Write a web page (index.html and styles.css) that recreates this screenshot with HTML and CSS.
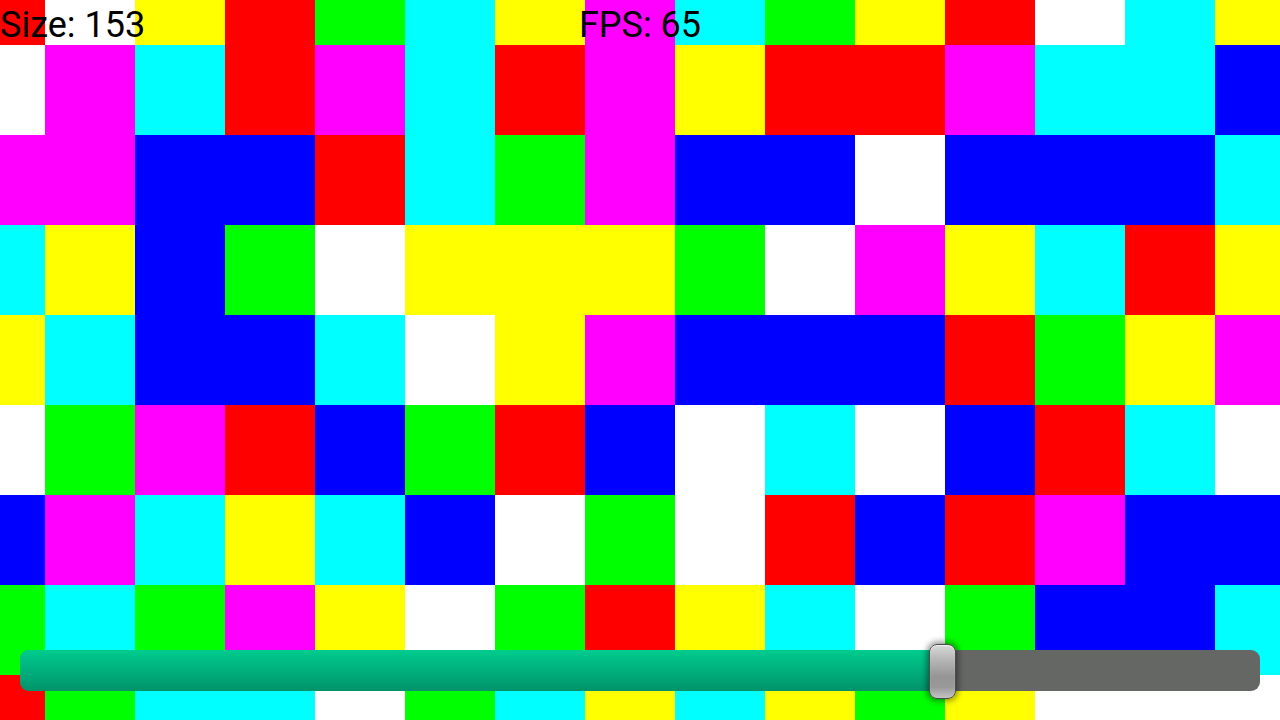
FILE: index.html
```html
<!DOCTYPE html>
<html>
<head>
<meta charset="utf-8">
<link rel="stylesheet" href="styles.css">
</head>
<body>
<div class="stage">
  <div class="grid">
    <i class="r"></i><i class="w"></i><i class="y"></i><i class="r"></i><i class="g"></i><i class="c"></i><i class="y"></i><i class="m"></i><i class="c"></i><i class="g"></i><i class="y"></i><i class="r"></i><i class="w"></i><i class="c"></i><i class="y"></i>
    <i class="w"></i><i class="m"></i><i class="c"></i><i class="r"></i><i class="m"></i><i class="c"></i><i class="r"></i><i class="m"></i><i class="y"></i><i class="r"></i><i class="r"></i><i class="m"></i><i class="c"></i><i class="c"></i><i class="b"></i>
    <i class="m"></i><i class="m"></i><i class="b"></i><i class="b"></i><i class="r"></i><i class="c"></i><i class="g"></i><i class="m"></i><i class="b"></i><i class="b"></i><i class="w"></i><i class="b"></i><i class="b"></i><i class="b"></i><i class="c"></i>
    <i class="c"></i><i class="y"></i><i class="b"></i><i class="g"></i><i class="w"></i><i class="y"></i><i class="y"></i><i class="y"></i><i class="g"></i><i class="w"></i><i class="m"></i><i class="y"></i><i class="c"></i><i class="r"></i><i class="y"></i>
    <i class="y"></i><i class="c"></i><i class="b"></i><i class="b"></i><i class="c"></i><i class="w"></i><i class="y"></i><i class="m"></i><i class="b"></i><i class="b"></i><i class="b"></i><i class="r"></i><i class="g"></i><i class="y"></i><i class="m"></i>
    <i class="w"></i><i class="g"></i><i class="m"></i><i class="r"></i><i class="b"></i><i class="g"></i><i class="r"></i><i class="b"></i><i class="w"></i><i class="c"></i><i class="w"></i><i class="b"></i><i class="r"></i><i class="c"></i><i class="w"></i>
    <i class="b"></i><i class="m"></i><i class="c"></i><i class="y"></i><i class="c"></i><i class="b"></i><i class="w"></i><i class="g"></i><i class="w"></i><i class="r"></i><i class="b"></i><i class="r"></i><i class="m"></i><i class="b"></i><i class="b"></i>
    <i class="g"></i><i class="c"></i><i class="g"></i><i class="m"></i><i class="y"></i><i class="w"></i><i class="g"></i><i class="r"></i><i class="y"></i><i class="c"></i><i class="w"></i><i class="g"></i><i class="b"></i><i class="b"></i><i class="c"></i>
    <i class="r"></i><i class="g"></i><i class="c"></i><i class="c"></i><i class="w"></i><i class="g"></i><i class="c"></i><i class="y"></i><i class="c"></i><i class="y"></i><i class="g"></i><i class="y"></i><i class="w"></i><i class="w"></i><i class="w"></i>
  </div>
  <div class="label size">Size: 153</div>
  <div class="label fps">FPS: 65</div>
  <div class="slider">
    <div class="fill" style="width: 922px"></div>
    <div class="thumb" style="left: 909px"></div>
  </div>
</div>
</body>
</html>
```
FILE: styles.css
```css
html, body {
  margin: 0;
  padding: 0;
  width: 1280px;
  height: 720px;
  overflow: hidden;
  background: #fff;
}
.stage {
  position: relative;
  width: 1280px;
  height: 720px;
  overflow: hidden;
  font-family: Roboto, "Liberation Sans", sans-serif;
}
.grid {
  display: grid;
  grid-template-columns: repeat(15, 90px);
  grid-template-rows: repeat(9, 90px);
  margin: -45px 0 0 -45px;
  width: 1350px;
}
.grid i { display: block; }
.r { background: #ff0000; }
.g { background: #00ff00; }
.b { background: #0000ff; }
.c { background: #00ffff; }
.m { background: #ff00ff; }
.y { background: #ffff00; }
.w { background: #ffffff; }
.label {
  position: absolute;
  top: 4px;
  font-size: 36px;
  line-height: normal;
  color: #000;
  white-space: nowrap;
}
.size { left: 0; }
.fps { left: 0; right: 0; text-align: center; }
.slider {
  position: absolute;
  left: 20px;
  top: 650px;
  width: 1240px;
  height: 41px;
  border-radius: 9px;
  background: #656765;
}
.fill {
  height: 100%;
  border-radius: 9px 0 0 9px;
  background: linear-gradient(to bottom, #00cc8e 0%, #00b07c 50%, #00926a 100%);
}
.thumb {
  position: absolute;
  top: -6px;
  width: 25px;
  height: 53px;
  border: 1px solid #4a4a4a;
  border-radius: 8px;
  background: linear-gradient(to bottom, #d8d8d8 0%, #b4b4b4 30%, #959595 60%, #9a9a9a 80%, #c4c4c4 100%);
  box-shadow: 0 0 6px 2px rgba(0,0,0,0.45), inset 0 1px 1px rgba(255,255,255,0.7);
}
```
